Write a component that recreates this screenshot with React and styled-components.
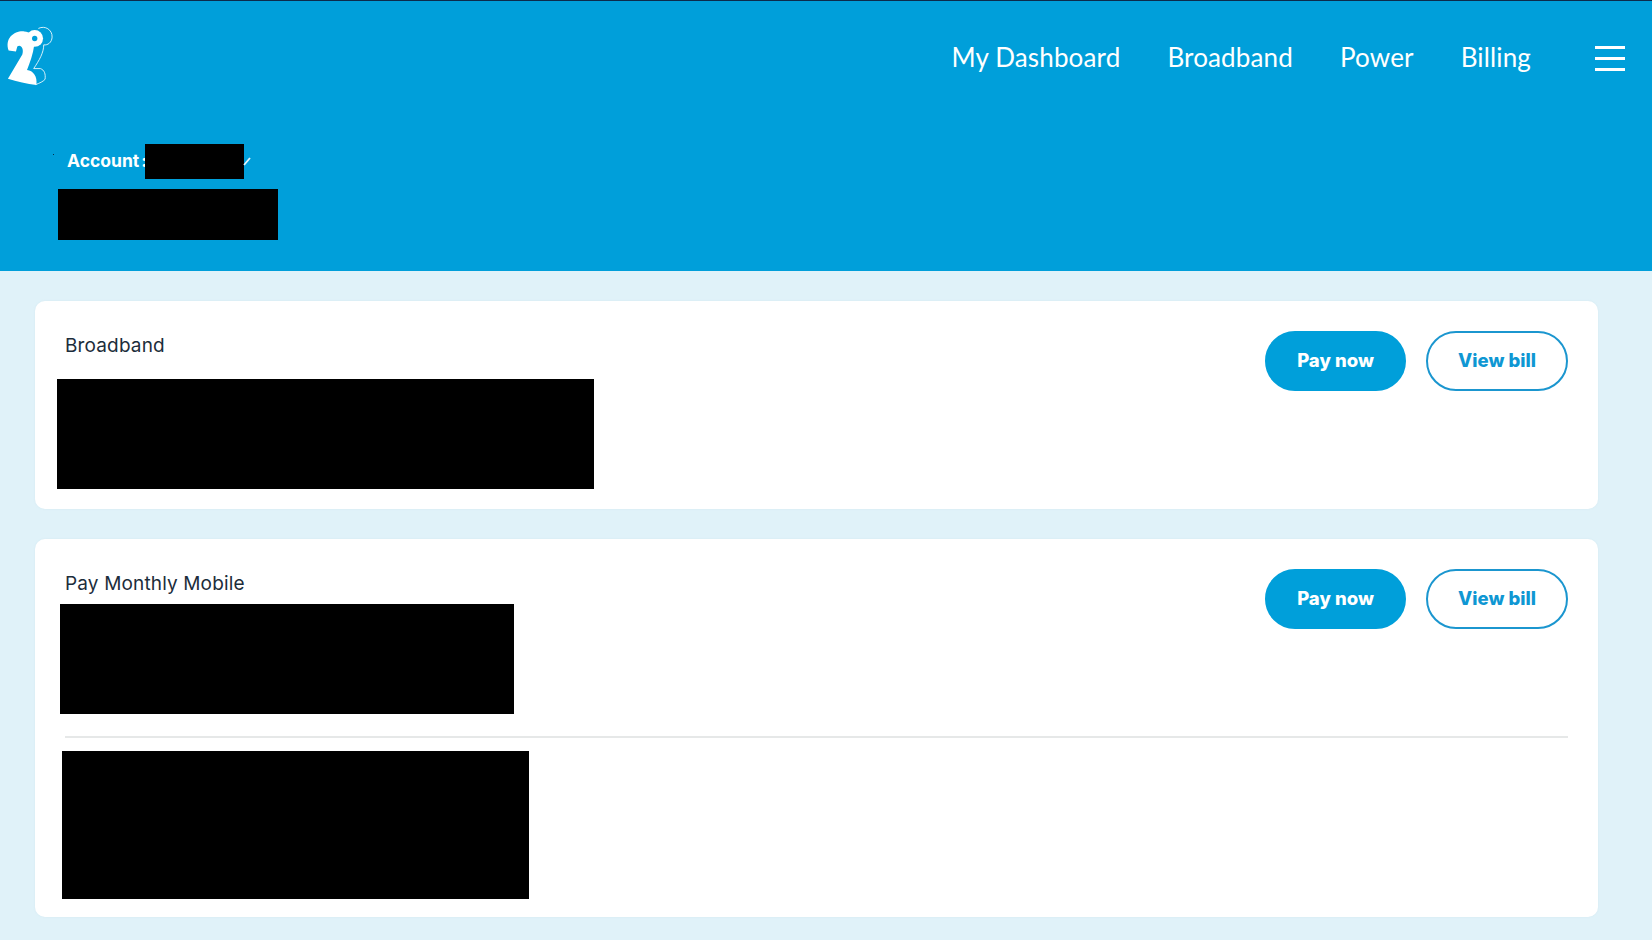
import React from "react";
import styled, { createGlobalStyle } from "styled-components";

const Global = createGlobalStyle`
  html, body { margin: 0; padding: 0; background: #e0f2f9; }
  body { font-family: "Inter", "Noto Sans", sans-serif; }
  * { box-sizing: border-box; }
`;
const Page = styled.div`width: 1652px; height: 940px; overflow: hidden; background: #e0f2f9;`;
const Header = styled.header`
  height: 271px; background: #009fda; border-top: 1px solid #0c2b4b; color: #fff;
`;
const TopRow = styled.div`
  height: 114px; display: flex; align-items: center; justify-content: space-between; padding-right: 27px;
`;
const LogoMark = styled.svg`width: 54px; height: 87px; display: block; align-self: flex-start;`;
const Nav = styled.nav`display: flex; align-items: center; gap: 47px; margin-top: -3px;`;
const NavLink = styled.a`
  font-family: "Lato", sans-serif; font-size: 26px; letter-spacing: 0.15px; line-height: 30px; font-weight: 400; color: #fff; white-space: nowrap;
`;
const Burger = styled.button`
  width: 30px; height: 25px; padding: 0; margin-left: 64px; border: 0; background: none;
  display: flex; flex-direction: column; justify-content: space-between;
  & > span { display: block; height: 3px; background: #fff; }
`;
const Right = styled.div`display: flex; align-items: center;`;
const AccountRow = styled.div`
  position: relative; margin-top: 29px; padding-left: 67px; height: 35px; display: flex; align-items: center;
  &::before { content: ""; position: absolute; left: 53px; top: 10px; width: 1px; height: 1px; background: #06304a; }
`;
const AccountLabel = styled.span`width: 78px; font-size: 17.5px; font-weight: 700; word-spacing: -2px; white-space: nowrap; margin-top: -2px;`;
const Redaction = styled.div`
  background: #000; flex: none;
  width: ${p => p.$w}px; height: ${p => p.$h}px;
  margin-left: ${p => p.$left || 0}px; margin-top: ${p => p.$top || 0}px;
`;
const Main = styled.main`padding: 30px 54px 0 35px; display: flex; flex-direction: column; gap: 30px;`;
const Card = styled.section`
  background: #fff; border-radius: 10px; padding: 30px 30px ${p => p.$bottom}px 30px;
  box-shadow: 0 0 2px rgba(180, 210, 225, .25);
`;
const CardRow = styled.div`display: flex; justify-content: space-between; align-items: flex-start;`;
const CardTitle = styled.h2`margin: 0; font-size: 19px; letter-spacing: 0.15px; line-height: 30px; font-weight: 400; color: #1c2d3b;`;
const Actions = styled.div`display: flex; gap: 20px;`;
const Pill = styled.a`
  height: 60px; width: ${p => p.$w}px; border-radius: 30px; display: flex; align-items: center; justify-content: center;
  font-size: 18.5px; font-weight: 800; padding-bottom: 2px; border: 2px solid ${p => (p.$solid ? "#009fda" : "#1b96cf")};
  background: ${p => (p.$solid ? "#009fda" : "#fff")};
  color: ${p => (p.$solid ? "#fff" : "#0f97d3")};
`;
const Divider = styled.hr`margin: 22px 0 13px; border: 0; height: 2px; background: #e6e8e8;`;

const Logo = () => (
  <LogoMark viewBox="0 0 160 260">
    <path fill="none" stroke="#fff" strokeWidth="2.5" d="M114 82 C134 72 156 86 155 108 C154 124 142 133 130 131 C130 155 116 178 100 202 L120 202 C132 206 136 218 134 234 C128 241 118 245 106 250" />
    <path fill="#fff" d="M25 148 C12 110 44 88 72 91 C88 92 98 100 100 116 L102 130 C98 160 88 186 80 206 C98 208 112 224 108 251 C80 247 50 240 23 232 L66 160 C72 140 60 128 51 136 L47 151 Z" />
    <circle cx="103" cy="112" r="25" fill="#fff" />
    <circle cx="103" cy="112" r="8" fill="#009fda" />
  </LogoMark>
);

const Chevron = () => (
  <svg width="8" height="9" viewBox="0 0 8 9" style={{ display: "block", marginLeft: -1 }}>
    <path d="M1 8 L7 1" stroke="#e4f4fb" strokeWidth="1.8" fill="none" />
  </svg>
);

const Buttons = () => (
  <Actions>
    <Pill $solid $w={141}>Pay now</Pill>
    <Pill $w={142}>View bill</Pill>
  </Actions>
);

export default function App() {
  return (
    <Page>
      <Global />
      <Header>
        <TopRow>
          <Logo />
          <Right>
            <Nav>
              <NavLink>My Dashboard</NavLink>
              <NavLink>Broadband</NavLink>
              <NavLink>Power</NavLink>
              <NavLink>Billing</NavLink>
            </Nav>
            <Burger aria-label="Menu"><span /><span /><span /></Burger>
          </Right>
        </TopRow>
        <AccountRow>
          <AccountLabel>Account :</AccountLabel>
          <Redaction $w={99} $h={35} />
          <Chevron />
        </AccountRow>
        <Redaction $w={220} $h={51} $left={58} $top={10} />
      </Header>
      <Main>
        <Card $bottom={20}>
          <CardRow>
            <div>
              <CardTitle>Broadband</CardTitle>
              <Redaction $w={537} $h={110} $left={-8} $top={18} />
            </div>
            <Buttons />
          </CardRow>
        </Card>
        <Card $bottom={18}>
          <CardRow>
            <div>
              <CardTitle>Pay Monthly Mobile</CardTitle>
              <Redaction $w={454} $h={110} $left={-5} $top={5} />
            </div>
            <Buttons />
          </CardRow>
          <Divider />
          <Redaction $w={467} $h={148} $left={-3} />
        </Card>
      </Main>
    </Page>
  );
}
